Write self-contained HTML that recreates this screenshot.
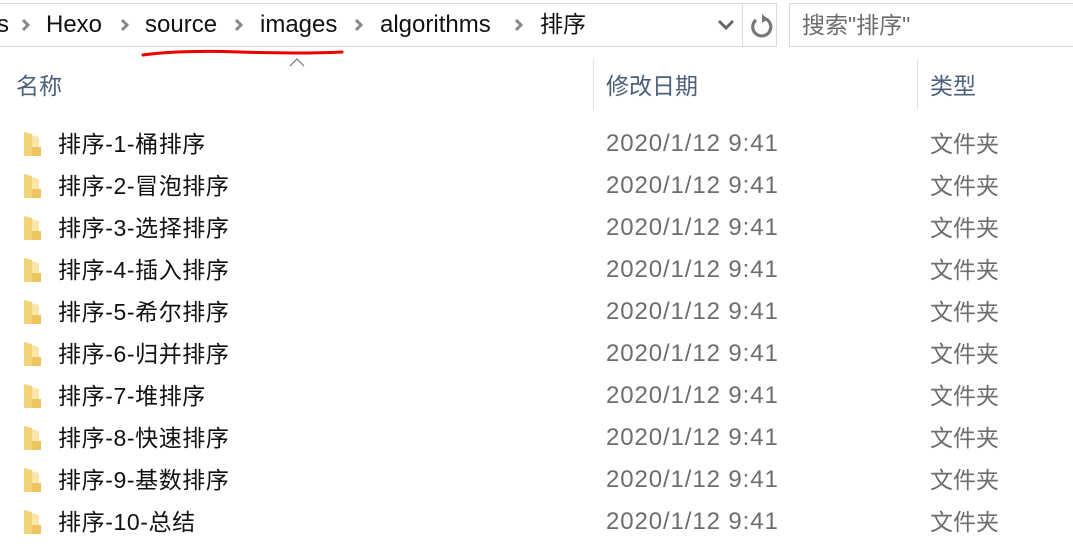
<!DOCTYPE html>
<html><head><meta charset="utf-8"><style>
body{margin:0;width:1073px;height:547px;background:#fff;overflow:hidden;position:relative;font-family:"Liberation Sans","Noto Sans CJK SC",sans-serif;}
.a{position:absolute;white-space:nowrap;line-height:30px;}
.bc{font-size:24px;color:#111;top:10px;}
.h{font-size:23px;color:#4c607a;top:71px;}
.n{font-size:23px;color:#111;left:58px;letter-spacing:0.6px}
.d{font-size:24px;color:#6d6d6d;left:606px;letter-spacing:0.9px}
.t{font-size:23px;color:#6d6d6d;left:930px;}
.f{left:23px;width:19px;height:26px;line-height:0}
</style></head><body>
<div class="a" style="left:-10px;top:3px;width:786px;height:42px;border:1px solid #d9d9d9;border-left:none;"></div>
<div class="a" style="left:742px;top:3px;width:1px;height:43px;background:#d9d9d9"></div>
<div class="a" style="left:789px;top:3px;width:300px;height:42px;border:1px solid #d9d9d9;"></div>
<div class="a bc" style="left:-3px">s</div>
<div class="a bc" style="left:46px">Hexo</div>
<div class="a bc" style="left:145px">source</div>
<div class="a bc" style="left:260px">images</div>
<div class="a bc" style="left:380px">algorithms</div>
<div class="a bc" style="left:540px;font-size:23px;top:9px">排序</div>
<svg class="a" style="left:0;top:0;line-height:0" width="540" height="50"><g stroke="#888" stroke-width="3" fill="none"><path d="M23 20 L28 25 L23 30"/><path d="M122 20 L127 25 L122 30"/><path d="M236 20 L241 25 L236 30"/><path d="M356 20 L361 25 L356 30"/><path d="M516 20 L521 25 L516 30"/></g></svg>
<svg class="a" style="left:716px;top:18px;line-height:0" width="20" height="14"><path d="M3 3 L10 10 L17 3" stroke="#666" stroke-width="3" fill="none"/></svg>
<svg class="a" style="left:749px;top:12px;line-height:0" width="26" height="28"><path d="M7 8 A9 9 0 1 0 17 7" stroke="#777" stroke-width="3.2" fill="none"/><path d="M13 2 L19 7 L13 11 Z" fill="#777"/></svg>
<div class="a" style="left:802px;top:10px;font-size:23px;color:#6d6d6d">搜索"排序"</div>
<svg class="a" style="left:140px;top:47px;line-height:0" width="206" height="12"><path d="M3 8 Q40 3 100 5 T202 5" stroke="#e00" stroke-width="3" fill="none" stroke-linecap="round"/></svg>
<svg class="a" style="left:289px;top:58px;line-height:0" width="16" height="9"><path d="M1 8 L8 1 L15 8" stroke="#666" stroke-width="1" fill="none"/></svg>
<div class="a h" style="left:16px">名称</div>
<div class="a" style="left:593px;top:59px;width:1px;height:51px;background:#e3e3e3"></div>
<div class="a h" style="left:606px">修改日期</div>
<div class="a" style="left:917px;top:59px;width:1px;height:51px;background:#e3e3e3"></div>
<div class="a h" style="left:930px">类型</div>
<div id="rows"></div>
<script>
var names=["排序-1-桶排序","排序-2-冒泡排序","排序-3-选择排序","排序-4-插入排序","排序-5-希尔排序","排序-6-归并排序","排序-7-堆排序","排序-8-快速排序","排序-9-基数排序","排序-10-总结"];
var h="";
names.forEach(function(n,i){var y=129+i*42;
h+='<svg class="a f" style="top:'+(y+2)+'px" viewBox="0 0 19 26"><path d="M1 1 L9 3 L9 25 L1 25 Z" fill="#f3d27a"/><path d="M9 16 L18 16 L18 25 L9 25 Z" fill="#ecc55e"/><path d="M9 4 L16 6 L16 16 L9 16 Z" fill="#fae7a8"/></svg>';
h+='<div class="a n" style="top:'+y+'px">'+n+'</div><div class="a d" style="top:'+y+'px">2020/1/12 9:41</div><div class="a t" style="top:'+y+'px">文件夹</div>';});
document.getElementById("rows").innerHTML=h;
</script>
</body></html>
